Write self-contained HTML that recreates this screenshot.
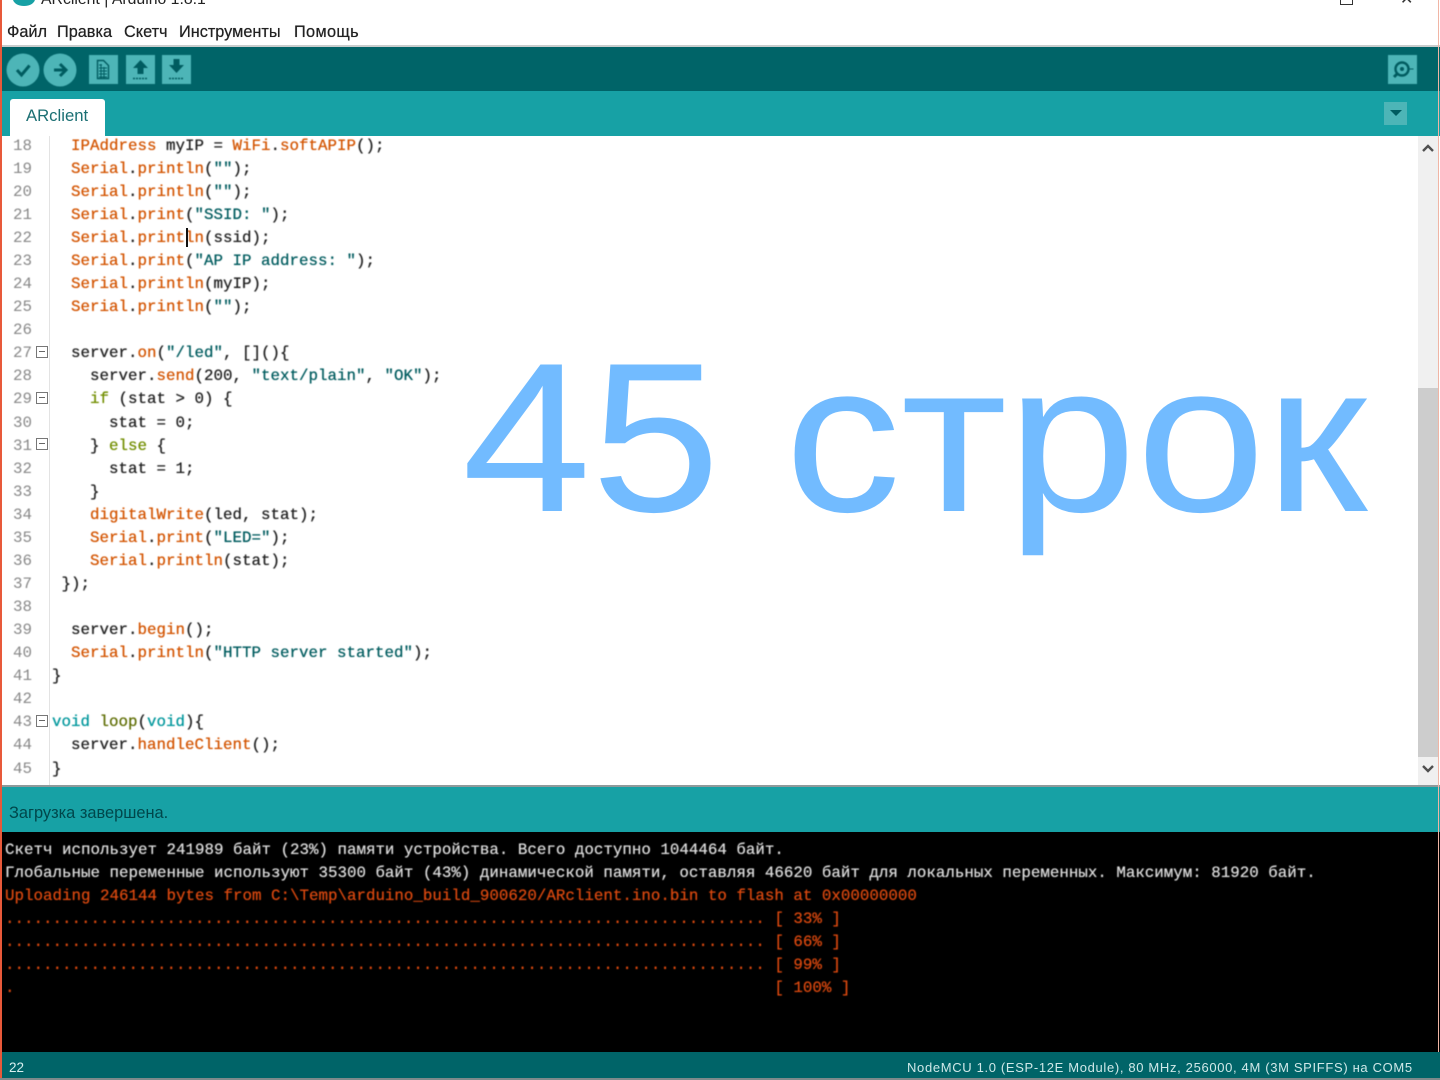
<!DOCTYPE html>
<html lang="ru"><head><meta charset="utf-8"><title>ARclient</title>
<style>
html,body{margin:0;padding:0;background:#fff}
#p{position:relative;width:1440px;height:1080px;overflow:hidden;background:#fff;font-family:"Liberation Sans","Noto Sans CJK SC",sans-serif}
.b{position:absolute}
.m{position:absolute;top:23px;font-size:16.3px;line-height:18px;color:#222;white-space:pre;text-shadow:0 0 .5px #222;filter:blur(.35px)}
.c{position:absolute;left:0;height:23px;font:15.83px/23px "Liberation Mono",monospace;white-space:pre;color:#222;text-shadow:0 0 .6px currentColor;filter:blur(.4px)}
.n{position:absolute;left:13px;font:15.83px/23px "Liberation Mono",monospace;color:#888;white-space:pre;filter:blur(.4px)}
.f{position:absolute;left:36px;width:10px;height:10px;border:1px solid #777;background:#fff}
.f:after{content:"";position:absolute;left:2px;top:4px;width:6px;height:1px;background:#666}
.o{color:#d35400}.s{color:#005c5f}.k{color:#728e00}.t{color:#00979c}.l{color:#5e6d03}
.w{color:#dcdcdc}.r{color:#d9480f}
</style></head><body><div id="p">
<div class="b" style="left:13px;top:-8px;width:22px;height:14px;border-radius:50%;background:#17a1a5"></div>
<div class="b" style="left:41px;top:-9px;font-size:15.8px;line-height:18px;color:#222;filter:blur(.3px)">ARclient | Arduino 1.8.1</div>
<div class="b" style="left:1340px;top:-6px;width:11px;height:9px;border:1.5px solid #333"></div>
<div class="b" style="left:1400px;top:-6px;font-size:16px;line-height:12px;color:#333">✕</div>

<div class="m" style="left:7px">Файл</div><div class="m" style="left:57px">Правка</div><div class="m" style="left:124px">Скетч</div><div class="m" style="left:179px">Инструменты</div><div class="m" style="left:294px;letter-spacing:.35px">Помощь</div>

<div class="b" style="left:0;top:45px;width:1440px;height:2px;background:#c9cdcd"></div>
<div class="b" style="left:0;top:47px;width:1440px;height:44px;background:#006468"></div>
<div class="b" style="left:0;top:91px;width:1440px;height:45px;background:#17a1a5"></div>

<svg class="b" style="left:0;top:47px;filter:blur(.4px)" width="200" height="44" viewBox="0 47 200 44">
<circle cx="23" cy="70" r="16.5" fill="#4db5b7"/><circle cx="60" cy="70" r="16.5" fill="#4db5b7"/>
<path d="M17 70l4.500 5 8-9.500" fill="none" stroke="#005c60" stroke-width="3"/>
<path d="M54 70h10M60 64l6 6-6 6" fill="none" stroke="#005c60" stroke-width="3"/>
<rect x="89" y="55" width="29" height="29" fill="#4db5b7"/><rect x="126" y="55" width="29" height="29" fill="#4db5b7"/><rect x="162" y="55" width="29" height="29" fill="#4db5b7"/>
<path d="M97.500 60.500h6l5 5v13h-11z" fill="none" stroke="#005c60" stroke-width="1.400"/>
<path d="M99 65h3M99 68h8M99 71h8M99 74h8M99 77h8M101 64v14M104 67v11" stroke="#005c60" stroke-width="1" fill="none"/>
<path d="M140.500 60l7.500 8h-4.500v6h-6v-6H133z" fill="#005c60"/><path d="M133 78.500h15" stroke="#005c60" stroke-width="1.500" stroke-dasharray="2 1"/>
<path d="M173.500 59h6v6h4.500l-7.500 8-7.500-8h4.500z" fill="#005c60"/><path d="M169 78.500h15" stroke="#005c60" stroke-width="1.500" stroke-dasharray="2 1"/>
</svg>
<svg class="b" style="left:1388px;top:55px;filter:blur(.4px)" width="29" height="29" viewBox="0 0 29 29">
<rect width="29" height="29" fill="#4db5b7"/><circle cx="14" cy="14" r="6.500" fill="none" stroke="#005c60" stroke-width="2.400"/><circle cx="14" cy="14" r="2" fill="#005c60"/><path d="M9 19l-3 3" stroke="#005c60" stroke-width="3"/><path d="M20.500 14h5" stroke="#005c60" stroke-width="1"/>
</svg>
<div class="b" style="left:1384px;top:102px;width:23px;height:23px;background:#4db5b7"></div>
<div class="b" style="left:1390px;top:110px;width:0;height:0;border-left:6px solid transparent;border-right:6px solid transparent;border-top:6px solid #005c60"></div>

<div class="b" style="left:10px;top:99px;width:95px;height:37px;background:#fff;border-radius:3px 3px 0 0"></div>
<div class="b" style="left:26px;top:107px;font-size:16.7px;line-height:18px;color:#1b6f73;filter:blur(.3px)">ARclient</div>

<div class="b" style="left:49px;top:136px;width:1px;height:649px;background:#e3e3e3"></div>
<div class="n" style="top:135px">18</div><div class="n" style="top:158px">19</div><div class="n" style="top:181px">20</div><div class="n" style="top:204px">21</div><div class="n" style="top:227px">22</div><div class="n" style="top:250px">23</div><div class="n" style="top:273px">24</div><div class="n" style="top:296px">25</div><div class="n" style="top:319px">26</div><div class="n" style="top:342px">27</div><div class="n" style="top:365px">28</div><div class="n" style="top:388px">29</div><div class="n" style="top:412px">30</div><div class="n" style="top:435px">31</div><div class="n" style="top:458px">32</div><div class="n" style="top:481px">33</div><div class="n" style="top:504px">34</div><div class="n" style="top:527px">35</div><div class="n" style="top:550px">36</div><div class="n" style="top:573px">37</div><div class="n" style="top:596px">38</div><div class="n" style="top:619px">39</div><div class="n" style="top:642px">40</div><div class="n" style="top:665px">41</div><div class="n" style="top:688px">42</div><div class="n" style="top:711px">43</div><div class="n" style="top:734px">44</div><div class="n" style="top:758px">45</div>
<div class="f" style="top:346px"></div><div class="f" style="top:392px"></div><div class="f" style="top:438px"></div><div class="f" style="top:715px"></div>

<div class="c" style="left:52px;top:135px">  <span class="o">IPAddress</span> myIP = <span class="o">WiFi</span>.<span class="o">softAPIP</span>();</div>
<div class="c" style="left:52px;top:158px">  <span class="o">Serial</span>.<span class="o">println</span>(<span class="s">""</span>);</div>
<div class="c" style="left:52px;top:181px">  <span class="o">Serial</span>.<span class="o">println</span>(<span class="s">""</span>);</div>
<div class="c" style="left:52px;top:204px">  <span class="o">Serial</span>.<span class="o">print</span>(<span class="s">"SSID: "</span>);</div>
<div class="c" style="left:52px;top:227px">  <span class="o">Serial</span>.<span class="o">println</span>(ssid);</div>
<div class="c" style="left:52px;top:250px">  <span class="o">Serial</span>.<span class="o">print</span>(<span class="s">"AP IP address: "</span>);</div>
<div class="c" style="left:52px;top:273px">  <span class="o">Serial</span>.<span class="o">println</span>(myIP);</div>
<div class="c" style="left:52px;top:296px">  <span class="o">Serial</span>.<span class="o">println</span>(<span class="s">""</span>);</div>
<div class="c" style="left:52px;top:342px">  server.<span class="o">on</span>(<span class="s">"/led"</span>, [](){</div>
<div class="c" style="left:52px;top:365px">    server.<span class="o">send</span>(200, <span class="s">"text/plain"</span>, <span class="s">"OK"</span>);</div>
<div class="c" style="left:52px;top:388px">    <span class="k">if</span> (stat &gt; 0) {</div>
<div class="c" style="left:52px;top:412px">      stat = 0;</div>
<div class="c" style="left:52px;top:435px">    } <span class="k">else</span> {</div>
<div class="c" style="left:52px;top:458px">      stat = 1;</div>
<div class="c" style="left:52px;top:481px">    }</div>
<div class="c" style="left:52px;top:504px">    <span class="o">digitalWrite</span>(led, stat);</div>
<div class="c" style="left:52px;top:527px">    <span class="o">Serial</span>.<span class="o">print</span>(<span class="s">"LED="</span>);</div>
<div class="c" style="left:52px;top:550px">    <span class="o">Serial</span>.<span class="o">println</span>(stat);</div>
<div class="c" style="left:52px;top:573px"> });</div>
<div class="c" style="left:52px;top:619px">  server.<span class="o">begin</span>();</div>
<div class="c" style="left:52px;top:642px">  <span class="o">Serial</span>.<span class="o">println</span>(<span class="s">"HTTP server started"</span>);</div>
<div class="c" style="left:52px;top:665px">}</div>
<div class="c" style="left:52px;top:711px"><span class="t">void</span> <span class="l">loop</span>(<span class="t">void</span>){</div>
<div class="c" style="left:52px;top:734px">  server.<span class="o">handleClient</span>();</div>
<div class="c" style="left:52px;top:758px">}</div>
<div class="b" style="left:186px;top:228px;width:2px;height:19px;background:#111"></div>

<div class="b" style="left:1418px;top:136px;width:20px;height:649px;background:#f0f0f0"></div>
<div class="b" style="left:1418px;top:388px;width:20px;height:369px;background:#cdcdcd"></div>
<svg class="b" style="left:1418px;top:136px" width="20" height="649" viewBox="0 0 20 649"><path d="M5 15l5-5 5 5M5 630l5 5 5-5" fill="none" stroke="#505050" stroke-width="2.400"/></svg>

<div class="b" style="left:0;top:785px;width:1440px;height:2px;background:#8f9a9b"></div>
<div class="b" style="left:0;top:787px;width:1440px;height:45px;background:#17a1a5"></div>
<div class="b" style="left:9px;top:804px;font-size:16.4px;line-height:18px;color:#00474b;filter:blur(.3px)">Загрузка завершена.</div>
<div class="b" style="left:0;top:832px;width:1440px;height:220px;background:#000"></div>

<div class="c w" style="left:5px;top:839px">Скетч использует 241989 байт (23%) памяти устройства. Всего доступно 1044464 байт.</div>
<div class="c w" style="left:5px;top:862px">Глобальные переменные используют 35300 байт (43%) динамической памяти, оставляя 46620 байт для локальных переменных. Максимум: 81920 байт.</div>
<div class="c r" style="left:5px;top:885px">Uploading 246144 bytes from C:\Temp\arduino_build_900620/ARclient.ino.bin to flash at 0x00000000</div>
<div class="c r" style="left:5px;top:908px">................................................................................ [ 33% ]</div>
<div class="c r" style="left:5px;top:931px">................................................................................ [ 66% ]</div>
<div class="c r" style="left:5px;top:954px">................................................................................ [ 99% ]</div>
<div class="c r" style="left:5px;top:977px">.                                                                                [ 100% ]</div>

<div class="b" style="left:0;top:1052px;width:1440px;height:28px;background:#006468"></div>
<div class="b" style="left:0;top:1078px;width:1440px;height:2px;background:#7d8a8b"></div>
<div class="b" style="left:9px;top:1060px;font-size:13.5px;line-height:16px;color:#d8f0f0;filter:blur(.3px)">22</div>
<div class="b" style="left:907px;top:1060px;font-size:13px;line-height:16px;letter-spacing:.66px;color:#cfe8e8;white-space:pre;filter:blur(.3px)">NodeMCU 1.0 (ESP-12E Module), 80 MHz, 256000, 4M (3M SPIFFS) на COM5</div>

<div class="b" style="left:0;top:0;width:2px;height:1078px;background:#e8593a"></div>
<div class="b" style="left:1438px;top:0;width:1px;height:1052px;background:#f0b5a5"></div>

<div class="b" style="left:462px;top:313px;font-size:213px;line-height:250px;color:#72bbff;white-space:pre;transform:scaleX(1.09);transform-origin:0 0">45 строк</div>
</div></body></html>
